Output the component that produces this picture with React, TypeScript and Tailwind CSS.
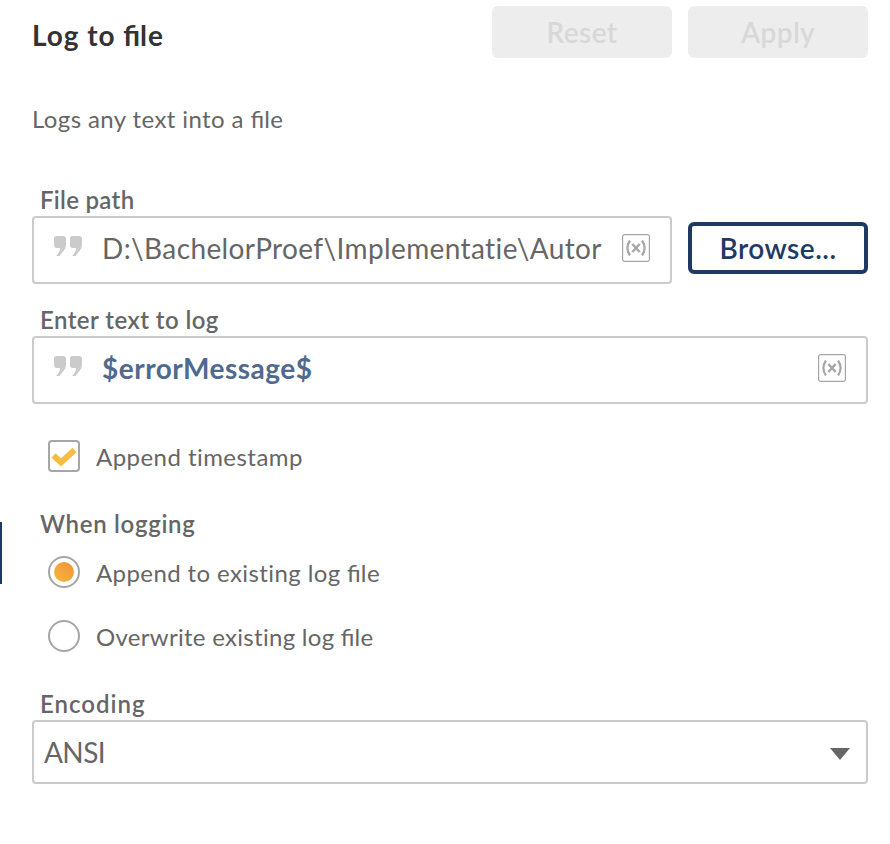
import type { ReactNode } from 'react';

function QuoteIcon() {
  return (
    <svg width="30" height="22" viewBox="0 0 30 22" className="-mt-1 shrink-0 fill-[#cbcbcb]">
      <path d="M3.500 1H10Q13 1 13 4V10C13 13 11 16 6.500 21H3.200C5.500 18.500 7 16 7 13H4Q1 13 1 10V3.500Q1 1 3.500 1Z" />
      <path d="M19.500 1H26Q29 1 29 4V10C29 13 27 16 22.500 21H19.200C21.500 18.500 23 16 23 13H20Q17 13 17 10V3.500Q17 1 19.500 1Z" />
    </svg>
  );
}

function VariableIcon() {
  return (
    <svg width="28" height="28" viewBox="0 0 28 28" fill="none" className="shrink-0 stroke-[#a6a6a6]">
      <rect x="0.6" y="0.6" width="26.800" height="26.800" rx="1.800" strokeWidth="1.200" />
      <path d="M8 6.500Q2.800 14 8 21.500M20 6.500Q25.200 14 20 21.500" strokeWidth="2.200" />
      <path d="M10.300 10L17.700 18M17.700 10L10.300 18" strokeWidth="2.500" />
    </svg>
  );
}

function FileWord() {
  return (
    <>
      <span className="tracking-normal">fi</span>le
    </>
  );
}

function Label({ children, className }: { children: ReactNode; className: string }) {
  return (
    <div className={`h-8 pl-2 text-2xl leading-8 font-semibold whitespace-nowrap ${className}`}>
      {children}
    </div>
  );
}

function Radio({ checked }: { checked: boolean }) {
  return (
    <span className="flex size-8 shrink-0 items-center justify-center rounded-full border-2 border-[#a6a6a6]">
      {checked && <span className="size-5 rounded-full bg-linear-to-tr from-[#f6b73f] to-[#f29237]" />}
    </span>
  );
}

export default function App() {
  return (
    <main className="flex h-[844px] w-[890px] overflow-hidden bg-white font-['Lato',sans-serif] text-[#666]">
      <div className="mt-[522px] h-[62px] w-0.5 bg-[#1e3a63]" />
      <div className="flex-1 pt-1.5 pr-[22px] pl-[30px]">
        <header className="flex h-[52px] gap-4">
          <h1 className="flex-1 pt-[9px] text-[28px] leading-10 font-bold tracking-[0.95px] text-[#333]">
            Log to <FileWord />
          </h1>
          <button className="w-[180px] rounded-md bg-[#ededed] text-[28px] font-semibold tracking-[0.4px] text-[#d8d8d8]">
            Reset
          </button>
          <button className="w-[180px] rounded-md bg-[#ededed] text-[28px] font-semibold tracking-[0.4px] text-[#d8d8d8]">
            Apply
          </button>
        </header>
        <p className="mt-[46px] h-20 text-2xl leading-[30px] tracking-[0.4px]">
          Logs any text into a <FileWord />
        </p>

        <Label className="tracking-[0.3px]">File path</Label>
        <div className="flex items-start gap-4">
          <div className="flex h-[68px] w-[640px] items-center rounded border-2 border-[#cbcbcb] pr-5 pb-1 pl-[19px] text-[28px]">
            <QuoteIcon />
            <span className="ml-[19px] flex-1 tracking-[0.38px] whitespace-nowrap">
              D:\BachelorProef\Implementatie\Autor
            </span>
            <VariableIcon />
          </div>
          <button className="mt-1.5 h-[52px] w-[180px] rounded-md border-4 border-[#1e3a63] text-[28px] font-semibold tracking-[0.5px] text-[#1e3a63]">
            Browse...
          </button>
        </div>

        <div className="mt-5">
          <Label className="tracking-[0.45px]">Enter text to log</Label>
        </div>
        <div className="flex h-[68px] items-center rounded border-2 border-[#cbcbcb] pr-5 pb-1 pl-[19px] text-[28px] font-bold text-[#4f6a8d]">
          <QuoteIcon />
          <span className="ml-[19px] flex-1 tracking-[0.5px]">$errorMessage$</span>
          <VariableIcon />
        </div>

        <label className="mt-9 flex h-8 items-center gap-4 pl-4 text-2xl">
          <span className="flex size-8 items-center justify-center rounded border-2 border-[#a6a6a6]">
            <svg width="28" height="28" viewBox="0 0 28 28" fill="none" className="stroke-[#f7bd42]">
              <path d="M3.500 13.500L11 20.500L24.500 8" strokeWidth="6" />
            </svg>
          </span>
          <span className="pt-px tracking-[0.45px]">Append timestamp</span>
        </label>

        <div className="mt-9">
          <Label className="tracking-[0.7px]">When logging</Label>
        </div>
        <label className="mt-4 flex h-8 items-center gap-4 pl-4 text-2xl">
          <Radio checked />
          <span className="pt-px tracking-[0.4px]">
            Append to existing log <FileWord />
          </span>
        </label>
        <label className="mt-8 flex h-8 items-center gap-4 pl-4 text-2xl">
          <Radio checked={false} />
          <span className="pt-px tracking-[0.29px]">
            Overwrite existing log <FileWord />
          </span>
        </label>

        <div className="mt-9">
          <Label className="tracking-[1px]">Encoding</Label>
        </div>
        <div className="flex h-16 items-center justify-between rounded border-2 border-[#cbcbcb] pr-4 pl-[10px] text-[28px]">
          <span className="tracking-[-0.6px]">ANSI</span>
          <svg width="20" height="12" viewBox="0 0 20 12" className="mt-1 fill-[#666]">
            <path d="M0 0H20L10 12Z" />
          </svg>
        </div>
      </div>
    </main>
  );
}
